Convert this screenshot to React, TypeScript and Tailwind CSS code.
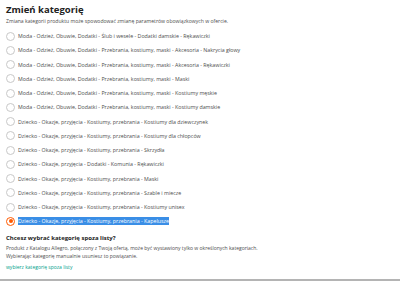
import React from 'react';

const CATEGORIES = [
  'Moda - Odzież, Obuwie, Dodatki - Ślub i wesele - Dodatki damskie - Rękawiczki',
  'Moda - Odzież, Obuwie, Dodatki - Przebrania, kostiumy, maski - Akcesoria - Nakrycia głowy',
  'Moda - Odzież, Obuwie, Dodatki - Przebrania, kostiumy, maski - Akcesoria - Rękawiczki',
  'Moda - Odzież, Obuwie, Dodatki - Przebrania, kostiumy, maski - Maski',
  'Moda - Odzież, Obuwie, Dodatki - Przebrania, kostiumy, maski - Kostiumy męskie',
  'Moda - Odzież, Obuwie, Dodatki - Przebrania, kostiumy, maski - Kostiumy damskie',
  'Dziecko - Okazje, przyjęcia - Kostiumy, przebrania - Kostiumy dla dziewczynek',
  'Dziecko - Okazje, przyjęcia - Kostiumy, przebrania - Kostiumy dla chłopców',
  'Dziecko - Okazje, przyjęcia - Kostiumy, przebrania - Skrzydła',
  'Dziecko - Okazje, przyjęcia - Dodatki - Komunia - Rękawiczki',
  'Dziecko - Okazje, przyjęcia - Kostiumy, przebrania - Maski',
  'Dziecko - Okazje, przyjęcia - Kostiumy, przebrania - Szable i miecze',
  'Dziecko - Okazje, przyjęcia - Kostiumy, przebrania - Kostiumy unisex',
  'Dziecko - Okazje, przyjęcia - Kostiumy, przebrania - Kapelusze',
];

const SELECTED = 13;

const App: React.FC = () => {
  return (
    <div className="w-[400px] h-[281px] bg-white overflow-hidden flex flex-col font-['Open_Sans',sans-serif] text-[#4d4d4d]">
      <div className="flex-1 px-[6px] pt-[3px]">
        <h2 className="text-[9.5px] leading-[13px] font-bold text-[#222]">Zmień kategorię</h2>
        <p className="text-[5.1px] leading-[8px] mt-[1px]">
          Zmiana kategorii produktu może spowodować zmianę parametrów obowiązkowych w ofercie.
        </p>

        <ul className="mt-[4px] flex flex-col">
          {CATEGORIES.map((name, i) => {
            const active = i === SELECTED;
            return (
              <li key={name} className="h-[14.25px] flex items-center">
                {active ? (
                  <span className="w-[9px] h-[9px] rounded-full border border-[#ff5a00] flex items-center justify-center shrink-0">
                    <span className="w-[4px] h-[4px] rounded-full bg-[#ff5a00]" />
                  </span>
                ) : (
                  <span className="w-[9px] h-[9px] rounded-full border border-[#c8c8c8] shrink-0" />
                )}
                <span
                  className={
                    active
                      ? 'ml-[3px] text-[5.3px] leading-[8px] bg-[#3a8ee6] text-white'
                      : 'ml-[3px] text-[5.3px] leading-[8px]'
                  }
                >
                  {name}
                </span>
              </li>
            );
          })}
        </ul>

        <h3 className="mt-[5px] text-[6px] leading-[9px] font-bold text-[#222]">Chcesz wybrać kategorię spoza listy?</h3>
        <p className="mt-[1px] text-[5px] leading-[8px]">
          Produkt z Katalogu Allegro, połączony z Twoją ofertą, może być wystawiony tylko w określonych kategoriach.
          <br />
          Wybierając kategorię manualnie usuniesz to powiązanie.
        </p>
        <a className="block mt-[3px] text-[5px] leading-[8px] text-[#00a08a]">wybierz kategorię spoza listy</a>
      </div>
      <div className="h-[2px] bg-[#b4b4b4]" />
    </div>
  );
};

export default App;
